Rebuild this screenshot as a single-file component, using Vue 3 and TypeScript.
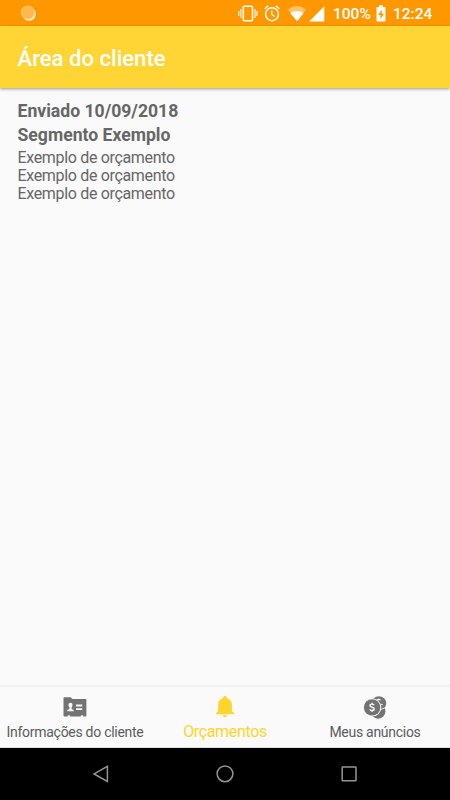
<script setup lang="ts">
import { ref } from 'vue'

type TabId = 'info' | 'quotes' | 'ads'

interface Tab {
  id: TabId
  label: string
}

interface Quote {
  sentAt: string
  segment: string
  lines: string[]
}

const tabs: Tab[] = [
  { id: 'info', label: 'Informações do cliente' },
  { id: 'quotes', label: 'Orçamentos' },
  { id: 'ads', label: 'Meus anúncios' },
]

const activeTab = ref<TabId>('quotes')

const quotes: Quote[] = [
  {
    sentAt: '10/09/2018',
    segment: 'Segmento Exemplo',
    lines: ['Exemplo de orçamento', 'Exemplo de orçamento', 'Exemplo de orçamento'],
  },
]
</script>

<template>
  <div class="screen">
    <div class="status">
      <svg class="sync" width="17" height="17" viewBox="0 0 17 17">
        <circle cx="9" cy="8.8" r="6.9" fill="#fff3dc" />
        <circle cx="7.7" cy="7.4" r="7" fill="#ffb84d" />
        <circle cx="7.7" cy="7.4" r="6.2" fill="none" stroke="#ffd596" stroke-width="1" stroke-dasharray="1 1" />
      </svg>
      <div class="status-icons">
        <svg class="vibrate" width="20" height="18" viewBox="0 0 20 18" fill="none" stroke="#fff">
          <rect x="5.3" y="1.3" width="9.2" height="14.4" rx="1" stroke-width="1.6" />
          <path d="M2.9 4v9M17 4v9" stroke-width="1.1" />
          <path d="M.8 6v5M19 6v5" stroke-width="1.1" />
        </svg>
        <svg class="alarm" width="16" height="17" viewBox="0 0 16 17" fill="none" stroke="#fff">
          <circle cx="8" cy="9.2" r="6.5" stroke-width="1.4" />
          <path d="M7.8 5.5v4l3 1.9" stroke-width="1.2" />
          <path d="M.6 3.8 4.2.8M15.4 3.8 11.8.8" stroke-width="1.4" />
        </svg>
        <svg class="wifi" width="18" height="16" viewBox="0 0 18 16">
          <path d="M0 3.5C5-1 13-1 18 3.5L9 15.3Z" fill="#ffc46b" />
          <path d="M2.5 7.2C6 4.2 12 4.2 15.5 7.2L9 15.3Z" fill="#fff" />
        </svg>
        <svg class="signal" width="16" height="16" viewBox="0 0 16 16">
          <path d="M15.3.2V15.4H.2Z" fill="#fff" />
        </svg>
        <span class="percent">100%</span>
        <svg class="battery" width="10" height="17" viewBox="0 0 10 17">
          <path d="M3 .2h4v1.9h1.5q1 0 1 1v12.4q0 1-1 1h-7q-1 0-1-1V3.1q0-1 1-1H3Z" fill="#fff" />
          <path d="M5.8 4.5 2.2 9.9h2.3v4.3L8 8.7H5.8Z" fill="#ff9800" />
        </svg>
        <span class="clock">12:24</span>
      </div>
    </div>

    <header class="appbar">
      <h1>Área do cliente</h1>
    </header>

    <main class="content">
      <article v-for="quote in quotes" :key="quote.sentAt">
        <h2 class="sent">Enviado {{ quote.sentAt }}</h2>
        <h2 class="segment">{{ quote.segment }}</h2>
        <div class="lines">
          <p v-for="(line, i) in quote.lines" :key="i">{{ line }}</p>
        </div>
      </article>
    </main>

    <nav class="tabs">
      <button
        v-for="tab in tabs"
        :key="tab.id"
        type="button"
        :class="['tab', tab.id, { active: tab.id === activeTab }]"
        @click="activeTab = tab.id"
      >
        <svg v-if="tab.id === 'info'" width="24" height="24" viewBox="0 0 24 24">
          <path
            d="M1.6 2.3H7.6L9.4 4H22.4q1 0 1 1V20.6q0 1-1 1h-2.1q0-1.5-1.3-1.5T17.7 21.6H7.1q0-1.5-1.3-1.5T4.5 21.6H1.5q-1 0-1-1V3.3q0-1 1.1-1Z"
            fill="#737373"
          />
          <path
            d="M7.4 7.8a2.1 2.2 0 0 1 2.1 2.3q0 1.3-.9 2.2v1.6l2.2 1v1.4H4.2v-1.4l2.2-1v-1.6q-1-.9-1-2.2a2.1 2.2 0 0 1 2-2.3ZM13 9.6h6.2v1.8H13zM13 13.2h6.2V15H13z"
            fill="#fafafa"
          />
        </svg>
        <svg v-else-if="tab.id === 'quotes'" width="24" height="24" viewBox="0 0 24 24">
          <path
            d="M12 .8a1.7 1.7 0 0 1 1.7 1.7V3c3.4.8 5.2 3.4 5.2 6.9V16l2.3 2.2v1H2.8v-1L5.1 16V9.9c0-3.5 1.8-6.1 5.2-6.9v-.5A1.7 1.7 0 0 1 12 .8ZM9.9 20.3h4.2a2.1 2 0 0 1-4.2 0Z"
            fill="#ffd42d"
          />
        </svg>
        <svg v-else width="24" height="24" viewBox="0 0 24 24">
          <circle cx="15.9" cy="8.5" r="7.3" fill="#737373" />
          <path d="M13.8 4.8q2-1.3 4 .3M15.9 3.4v2.1M17.4 9.3l2.4.8" fill="none" stroke="#fafafa" stroke-width="1.1" />
          <path d="M18.2 12.6q2.6 1.6 2.8 4.4" fill="none" stroke="#fafafa" stroke-width="1" />
          <circle cx="15.1" cy="16.4" r="7.3" fill="#737373" />
          <path d="M17.2 14.6q2-.6 4.6-1.8" fill="none" stroke="#fafafa" stroke-width=".9" />
          <circle cx="9.1" cy="12.4" r="9.2" fill="#fafafa" />
          <circle cx="9.1" cy="12.4" r="8.2" fill="#737373" />
          <path
            d="M11.1 10.3Q10.7 9.1 9 9.1q-2 0-2 1.4 0 1.2 2.1 1.7t2.1 1.8q0 1.5-2.2 1.5-1.8 0-2.2-1.4M9.1 7.7v1.4M9.1 15.5V17"
            fill="none"
            stroke="#fafafa"
            stroke-width="1.4"
          />
        </svg>
        <span>{{ tab.label }}</span>
      </button>
    </nav>

    <div class="system-nav">
      <svg width="18" height="18" viewBox="0 0 18 18">
        <path d="M15.4 1.3v15.2L2 8.9Z" />
      </svg>
      <svg width="18" height="18" viewBox="0 0 18 18">
        <circle cx="9" cy="8.8" r="7.9" />
      </svg>
      <svg width="18" height="18" viewBox="0 0 18 18">
        <rect x="2.2" y="2" width="13.8" height="13.8" rx=".5" />
      </svg>
    </div>
  </div>
</template>

<style>
body {
  margin: 0;
}
</style>

<style scoped>
.screen {
  display: flex;
  flex-direction: column;
  width: 450px;
  height: 800px;
  overflow: hidden;
  background: #fafafa;
  font-family: Roboto, 'Liberation Sans', sans-serif;
}

svg {
  display: block;
  flex: none;
}

.status {
  display: flex;
  justify-content: space-between;
  align-items: flex-start;
  height: 26px;
  flex: none;
  padding: 0 17px 0 20px;
  box-sizing: border-box;
  background: #ff9800;
  color: #fff;
}

.sync {
  margin-top: 5px;
}

.status-icons {
  display: flex;
  align-items: center;
  height: 27px;
  font-size: 15.5px;
  font-weight: 500;
  line-height: 27px;
}

.alarm {
  margin-left: 6px;
}

.wifi {
  margin-left: 8px;
}

.signal {
  margin-left: 3px;
}

.percent {
  width: 38px;
  margin-left: 8px;
  padding-top: 2px;
}

.battery {
  margin-left: 5px;
}

.clock {
  width: 40px;
  margin-left: 7px;
  padding-top: 2px;
}

.appbar {
  display: flex;
  align-items: center;
  height: 62px;
  flex: none;
  padding: 2px 17.5px 0;
  box-sizing: border-box;
  background: #ffd535;
  box-shadow: 0 1px 3px rgba(0, 0, 0, 0.4);
}

h1 {
  margin: 0;
  color: #fff;
  font-size: 22.1px;
  font-weight: 500;
  line-height: 30px;
}

.content {
  flex: 1;
  padding: 11px 17.5px 0;
  color: #666;
}

h2 {
  margin: 0;
  font-size: 17.6px;
  font-weight: 700;
  line-height: 24px;
}

.lines {
  padding-top: 2px;
}

p {
  margin: 0;
  font-size: 16px;
  letter-spacing: -0.33px;
  line-height: 18px;
}

.tabs {
  display: flex;
  height: 63px;
  flex: none;
  box-sizing: border-box;
  border-top: 2px solid #f2f2f2;
  border-bottom: 1px solid #ddd;
}

.tab {
  display: flex;
  flex: 1 1 0;
  flex-direction: column;
  align-items: center;
  min-width: 0;
  padding: 8px 0 0;
  border: 0;
  background: none;
  color: #5c5c5c;
  font: 14px/20px Roboto, 'Liberation Sans', sans-serif;
  letter-spacing: -0.28px;
  white-space: nowrap;
}

.tab span {
  margin-top: 3px;
}

.tab.active {
  color: #ffd42d;
  font-size: 16px;
  letter-spacing: -0.35px;
}

.system-nav {
  display: flex;
  justify-content: center;
  align-items: center;
  gap: 106px;
  height: 52px;
  flex: none;
  background: #000;
  fill: none;
  stroke: #949494;
  stroke-width: 1.5;
}
</style>
